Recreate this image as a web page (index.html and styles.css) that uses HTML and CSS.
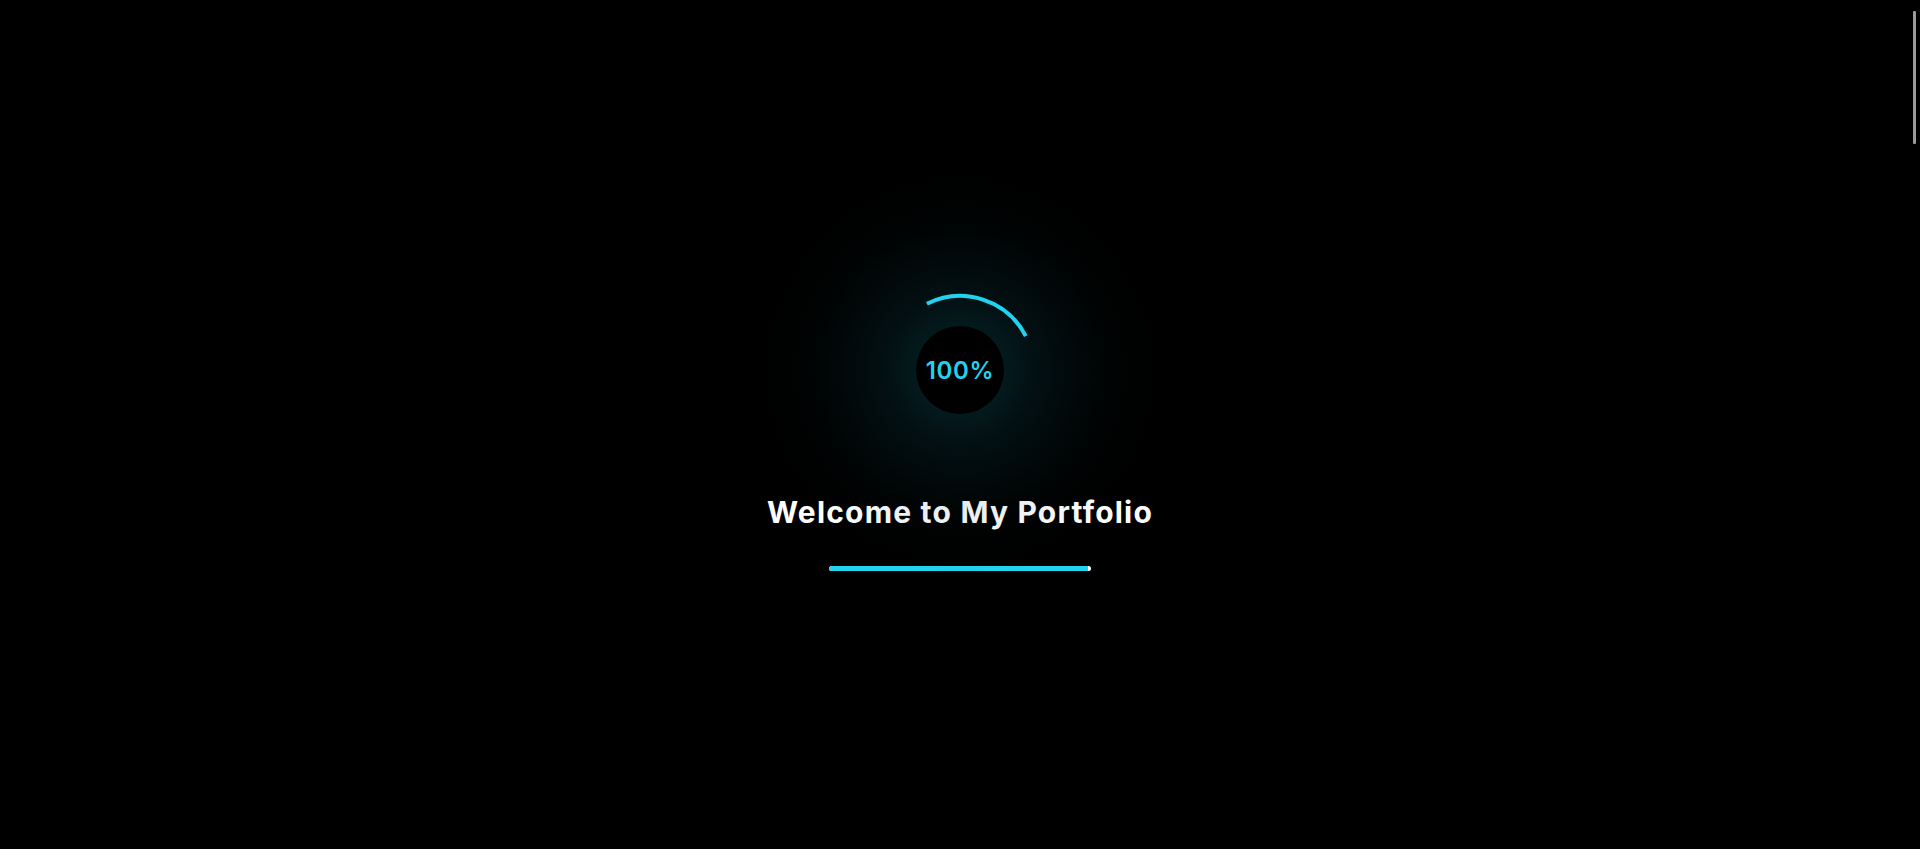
FILE: index.html
```html
<!DOCTYPE html>
<html lang="en">
<head>
<meta charset="utf-8">
<title>Loading</title>
<link rel="stylesheet" href="styles.css">
</head>
<body>
<main class="loader-screen">
  <div class="loader">
    <div class="glow"></div>
    <svg class="arc" viewBox="0 0 160 160" width="160" height="160">
      <path d="M46.9 13.8 A74 74 0 0 1 145.8 46.1" fill="none" stroke="#22d3ee" stroke-width="4"/>
    </svg>
    <div class="core"><span class="pct">100%</span></div>
  </div>
  <h1 class="title">Welcome to My Portfolio</h1>
  <div class="progress"><div class="progress-fill"></div></div>
</main>
<div class="scroll-thumb"></div>
</body>
</html>
```
FILE: styles.css
```css
html, body {
  margin: 0;
  padding: 0;
  background: #000;
  height: 100%;
  overflow: hidden;
}
body {
  font-family: Inter, "Noto Sans", sans-serif;
}
.loader-screen {
  height: 849px;
  display: flex;
  flex-direction: column;
  align-items: center;
  padding-top: 290px;
  box-sizing: border-box;
}
.loader {
  position: relative;
  width: 160px;
  height: 160px;
  display: flex;
  align-items: center;
  justify-content: center;
}
.glow {
  position: absolute;
  left: -160px;
  top: -160px;
  width: 480px;
  height: 480px;
  border-radius: 50%;
  background: radial-gradient(circle at center, rgba(18, 105, 120, 0.38) 0%, rgba(12, 80, 92, 0.2) 22%, rgba(6, 45, 52, 0.08) 42%, rgba(0, 0, 0, 0) 60%);
}
.arc {
  position: absolute;
  left: 0;
  top: 0;
}
.core {
  position: relative;
  width: 88px;
  height: 88px;
  border-radius: 50%;
  background: #000;
  display: flex;
  align-items: center;
  justify-content: center;
}
.pct {
  color: #22d3ee;
  font-size: 24px;
  font-weight: 600;
  letter-spacing: 0.6px;
  padding-top: 1px;
}
.title {
  margin: 44px 0 0;
  color: #fff;
  font-size: 30px;
  line-height: 36px;
  font-weight: 700;
  letter-spacing: 1.2px;
}
.progress {
  margin-top: 36px;
  width: 262px;
  height: 5px;
  border-radius: 3px;
  background: #fff;
  overflow: hidden;
}
.progress-fill {
  width: 259px;
  height: 100%;
  background: #22d3ee;
  border-radius: 3px 0 0 3px;
}
.scroll-thumb {
  position: fixed;
  right: 4px;
  top: 11px;
  width: 3px;
  height: 133px;
  background: #9a9a9a;
  border-radius: 1px;
}
```
